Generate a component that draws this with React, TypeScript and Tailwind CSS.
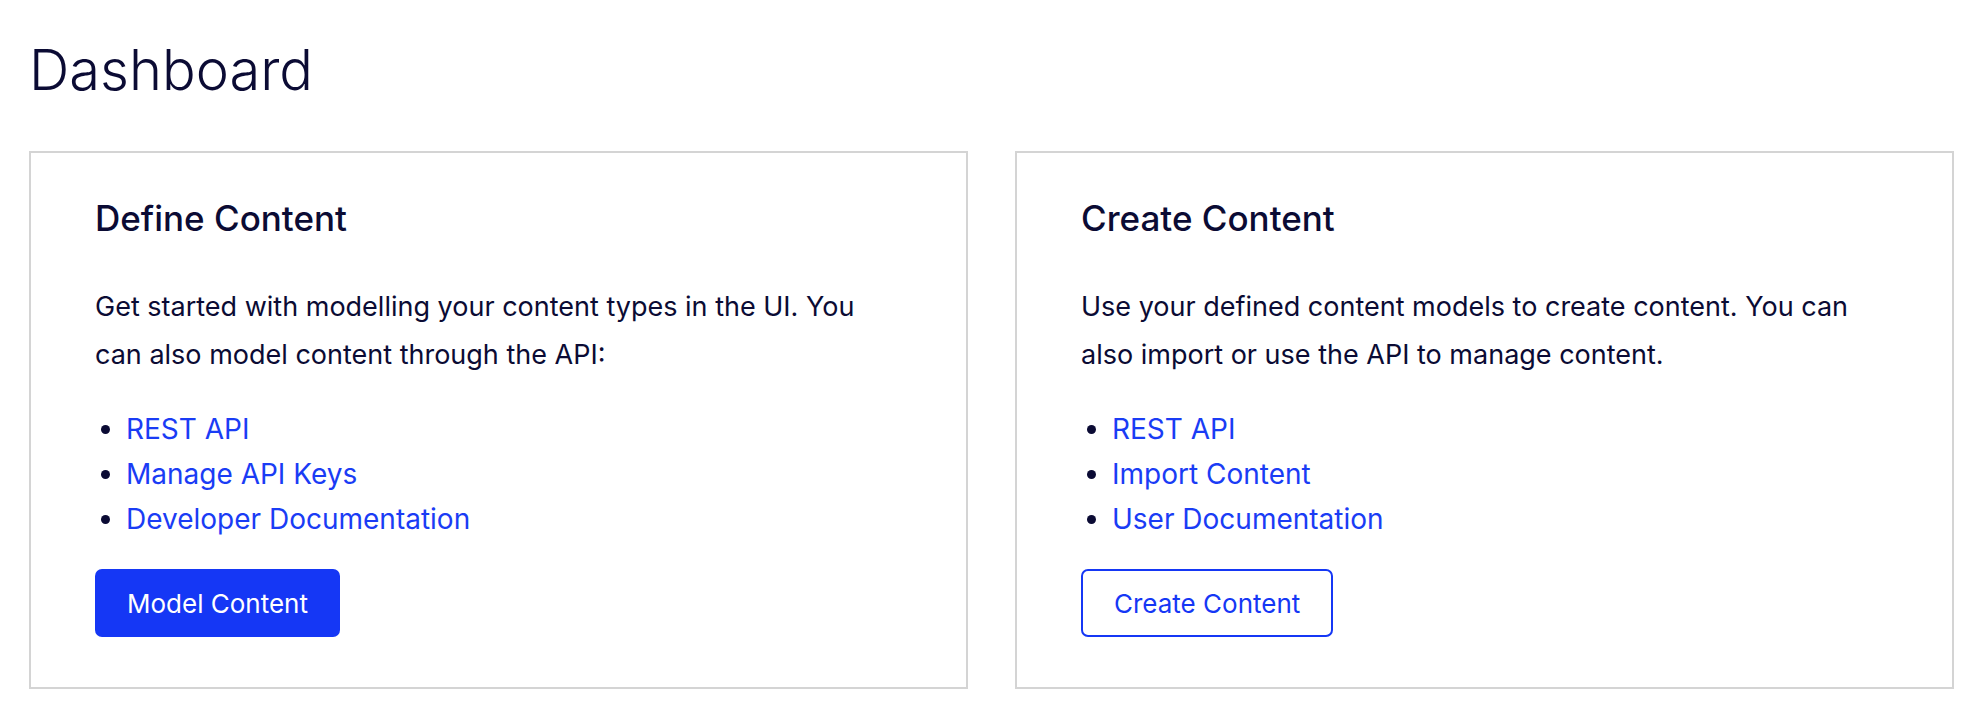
const links = {
  define: ['REST API', 'Manage API Keys', 'Developer Documentation'],
  create: ['REST API', 'Import Content', 'User Documentation'],
}

function Card({
  title,
  body,
  items,
  action,
  primary,
}: {
  title: string
  body: string
  items: string[]
  action: string
  primary?: boolean
}) {
  return (
    <div className="border-2 border-[#d4d4d4] pt-[48px] pb-[50px] pl-[64px] pr-[60px]">
      <h2 className="text-[35px] leading-none font-medium text-[#0b0b34]">{title}</h2>
      <p className="mt-[47px] text-[27px] leading-[48px] text-[#0b0b34]">{body}</p>
      <ul className="mt-[28px] list-disc pl-[31px] text-[#0b0b34] marker:text-[#0b0b34]">
        {items.map((item) => (
          <li key={item} className="text-[28px] leading-[45px]">
            <a href="#" className="text-[#1a3cf5]">
              {item}
            </a>
          </li>
        ))}
      </ul>
      <button
        className={
          primary
            ? 'mt-[27px] h-[68px] rounded-[7px] bg-[#1537f5] px-[32px] text-[26px] text-white'
            : 'mt-[27px] h-[68px] rounded-[7px] border-2 border-[#1537f5] bg-white px-[31px] text-[26px] text-[#1537f5]'
        }
      >
        {action}
      </button>
    </div>
  )
}

export default function App() {
  return (
    <div
      className="min-h-screen bg-white pl-[29px] pr-[22px]"
      style={{ fontFamily: 'Inter, "Noto Sans", sans-serif' }}
    >
      <h1 className="pt-[42px] pb-[2px] text-[56px] leading-none font-light text-[#0b0b34]">Dashboard</h1>
      <div className="mt-[51px] grid grid-cols-2 gap-[47px]">
        <Card
          title="Define Content"
          body="Get started with modelling your content types in the UI. You can also model content through the API:"
          items={links.define}
          action="Model Content"
          primary
        />
        <Card
          title="Create Content"
          body="Use your defined content models to create content. You can also import or use the API to manage content."
          items={links.create}
          action="Create Content"
        />
      </div>
    </div>
  )
}
